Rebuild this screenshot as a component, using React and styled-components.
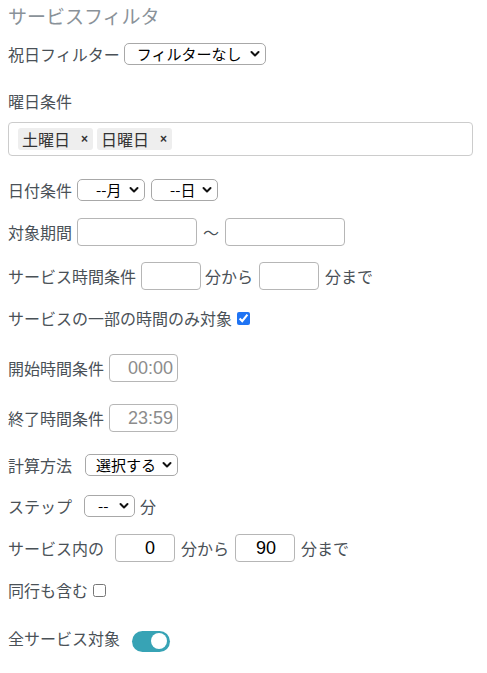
import React from 'react';
import styled, { createGlobalStyle } from 'styled-components';

const Global = createGlobalStyle`
  body {
    margin: 0;
    background: #fff;
  }
`;

const Page = styled.div`
  padding: 4px 14px 20px 8px;
  font-family: "Noto Sans CJK JP", "Noto Sans", sans-serif;
  font-size: 16px;
  color: #4a5157;
`;

const Title = styled.h1`
  margin: 0;
  font-size: 19px;
  font-weight: 400;
  line-height: 24px;
  color: #8a9299;
`;

const Row = styled.div`
  display: flex;
  align-items: center;
  gap: 5px;
  height: 28px;
  margin-top: ${p => p.$top}px;
  white-space: nowrap;
`;

const Label = styled.span`
  line-height: 28px;
`;

const Unit = styled.span`
  line-height: 28px;
  margin: 0 ${p => p.$mx || 0}px;
`;

const SelectBox = styled.span`
  position: relative;
  display: inline-flex;
  margin-left: ${p => p.$ml || 0}px;
`;

const Select = styled.select`
  appearance: none;
  box-sizing: border-box;
  width: ${p => p.$w}px;
  height: 22px;
  margin: 0;
  padding: 0 18px 0 ${p => p.$pl}px;
  border: 1px solid #a8a8a8;
  border-radius: 5px;
  background: #fff;
  color: #000;
  font-family: "Noto Sans CJK JP", sans-serif;
  font-size: 15px;
  line-height: 20px;
`;

const Chevron = styled.svg`
  position: absolute;
  right: 6px;
  top: 50%;
  transform: translateY(-50%);
  pointer-events: none;
`;

const TextInput = styled.input`
  box-sizing: border-box;
  width: ${p => p.$w}px;
  height: 28px;
  margin: 0 0 0 ${p => p.$ml || 0}px;
  padding: 0 ${p => p.$pr || 4}px 0 4px;
  border: 1px solid #b6b6b6;
  border-radius: 4px;
  background: #fff;
  color: ${p => (p.$muted ? '#8c8c8c' : '#000')};
  font-family: "Liberation Sans", Arial, sans-serif;
  font-size: 18px;
  text-align: ${p => p.$align || 'left'};
  outline: none;
`;

const TagBox = styled.div`
  box-sizing: border-box;
  height: 34px;
  margin-top: 7px;
  padding: 0 9px;
  display: flex;
  align-items: center;
  gap: 4px;
  border: 1px solid #cccccc;
  border-radius: 4px;
`;

const Tag = styled.span`
  display: inline-flex;
  align-items: center;
  height: 22px;
  padding: 0 5px 0 4px;
  border-radius: 3px;
  background: #eeeeee;
  color: #333;
  font-size: 16px;
  line-height: 22px;
`;

const Remove = styled.span`
  margin-left: 11px;
  font-family: "Liberation Sans", Arial, sans-serif;
  font-size: 12px;
  font-weight: 700;
  color: #333;
`;

const Check = styled.input`
  width: 13px;
  height: 13px;
  margin: 0;
  accent-color: #1f74f4;
`;

const Switch = styled.span`
  position: relative;
  display: inline-block;
  width: 38px;
  height: 21px;
  margin: 6px 0 0 7px;
  border-radius: 11px;
  background: #37a3b5;

  &::after {
    content: '';
    position: absolute;
    top: 2.5px;
    right: 3px;
    width: 16px;
    height: 16px;
    border-radius: 50%;
    background: #fff;
  }
`;

function Dropdown({ w, pl, ml, children }) {
  return (
    <SelectBox $ml={ml}>
      <Select $w={w} $pl={pl}>
        <option>{children}</option>
      </Select>
      <Chevron width="10" height="7" viewBox="0 0 10 7">
        <path d="M1.5 1.5 L5 5 L8.5 1.5" fill="none" stroke="#111" strokeWidth="2" strokeLinecap="round" strokeLinejoin="round" />
      </Chevron>
    </SelectBox>
  );
}

export default function App() {
  return (
    <Page>
      <Global />
      <Title>サービスフィルタ</Title>

      <Row $top={12}>
        <Label>祝日フィルター</Label>
        <Dropdown w={142} pl={12} ml={-1}>フィルターなし</Dropdown>
      </Row>

      <Row $top={19}>
        <Label>曜日条件</Label>
      </Row>
      <TagBox>
        <Tag>土曜日<Remove>×</Remove></Tag>
        <Tag>日曜日<Remove>×</Remove></Tag>
      </TagBox>

      <Row $top={20}>
        <Label>日付条件</Label>
        <Dropdown w={68} pl={18}>--月</Dropdown>
        <Dropdown w={67} pl={18} ml={1}>--日</Dropdown>
      </Row>

      <Row $top={14}>
        <Label>対象期間</Label>
        <TextInput $w={120} />
        <Unit $mx={1}>〜</Unit>
        <TextInput $w={120} />
      </Row>

      <Row $top={16}>
        <Label>サービス時間条件</Label>
        <TextInput $w={60} />
        <Unit $mx={-1}>分から</Unit>
        <TextInput $w={60} $ml={2} />
        <Unit $mx={1}>分まで</Unit>
      </Row>

      <Row $top={14}>
        <Label>サービスの一部の時間のみ対象</Label>
        <Check type="checkbox" defaultChecked />
      </Row>

      <Row $top={22}>
        <Label>開始時間条件</Label>
        <TextInput $w={69} $align="right" $muted readOnly value="00:00" />
      </Row>

      <Row $top={22}>
        <Label>終了時間条件</Label>
        <TextInput $w={69} $align="right" $muted readOnly value="23:59" />
      </Row>

      <Row $top={19}>
        <Label>計算方法</Label>
        <Dropdown w={93} pl={10} ml={8}>選択する</Dropdown>
      </Row>

      <Row $top={13}>
        <Label>ステップ</Label>
        <Dropdown w={51} pl={13} ml={7}>--</Dropdown>
        <Unit>分</Unit>
      </Row>

      <Row $top={14}>
        <Label>サービス内の</Label>
        <TextInput $w={60} $ml={6} $align="right" $pr={19} readOnly value="0" />
        <Unit $mx={1}>分から</Unit>
        <TextInput $w={60} $align="right" $pr={18} readOnly value="90" />
        <Unit $mx={1}>分まで</Unit>
      </Row>

      <Row $top={14}>
        <Label>同行も含む</Label>
        <Check type="checkbox" />
      </Row>

      <Row $top={20}>
        <Label>全サービス対象</Label>
        <Switch />
      </Row>
    </Page>
  );
}
